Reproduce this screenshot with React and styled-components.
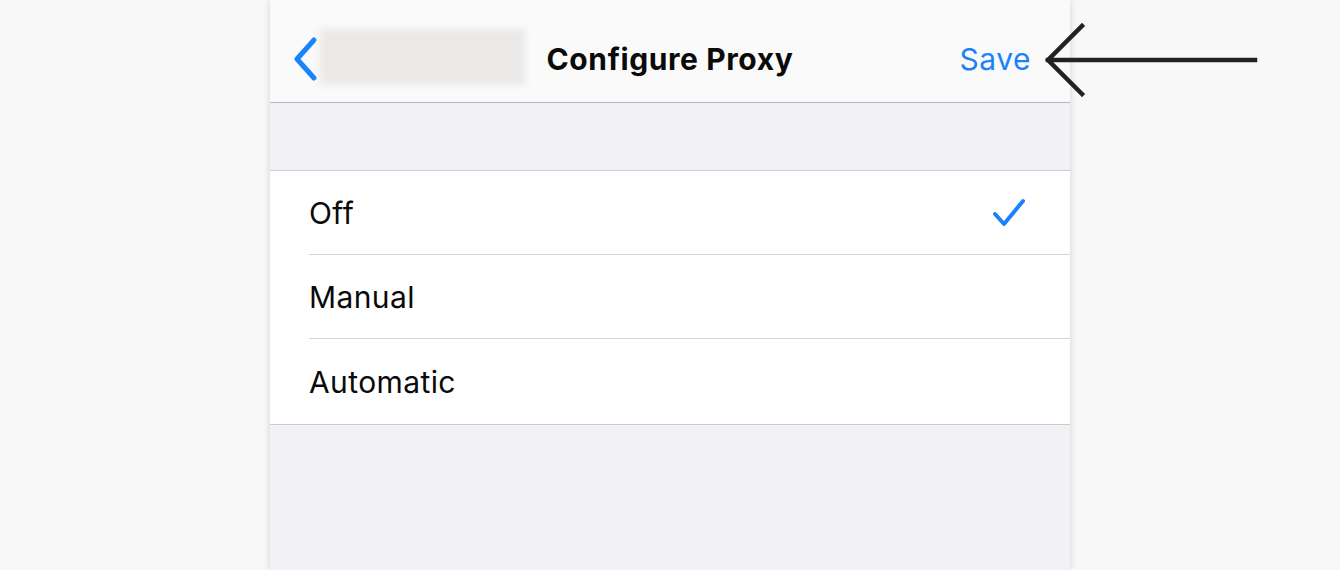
import React from "react";
import styled, { createGlobalStyle } from "styled-components";

const Global = createGlobalStyle`
  html, body { margin: 0; padding: 0; background: #f8f8f8; }
  body { font-family: Inter, "Open Sans", "Liberation Sans", sans-serif; }
  * { box-sizing: border-box; }
`;

const Page = styled.div`
  position: relative;
  width: 1340px;
  height: 570px;
  overflow: hidden;
  display: flex;
  justify-content: center;
`;

const Phone = styled.div`
  width: 800px;
  height: 570px;
  background: #f1f1f6;
  box-shadow: 0 0 7px rgba(0, 0, 0, 0.16);
  display: flex;
  flex-direction: column;
`;

const NavBar = styled.div`
  height: 103px;
  background: #fafafa;
  border-bottom: 1px solid #b9b9bb;
  display: grid;
  grid-template-columns: 1fr auto 1fr;
  align-items: center;
  padding: 16px 39px 0 39px;
`;

const NavLeft = styled.div`
  display: flex;
  align-items: center;
  margin-left: -17px;
`;

const Blur = styled.div`
  width: 205px;
  height: 56px;
  margin-top: -4px;
  background: #ebe9e8;
  filter: blur(3px);
  border-radius: 2px;
`;

const Title = styled.div`
  font-size: 30px;
  font-weight: 700;
  color: #0a0a0a;
  letter-spacing: 0.6px;
`;

const SaveBtn = styled.div`
  justify-self: end;
  font-size: 30px;
  letter-spacing: 0.5px;
  color: #1a82fb;
`;

const Spacer = styled.div`
  height: 67px;
`;

const List = styled.div`
  background: #ffffff;
  border-top: 1px solid #cbcbcd;
  border-bottom: 1px solid #cbcbcd;
`;

const Row = styled.div`
  height: ${(p) => (p.$last ? 85 : 84)}px;
  margin-left: 39px;
  padding-right: 44px;
  display: flex;
  align-items: center;
  justify-content: space-between;
  border-bottom: ${(p) => (p.$last ? "none" : "1px solid #d4d4d6")};
  font-size: 30px;
  letter-spacing: 0.4px;
  color: #0a0a0a;
`;

const ArrowWrap = styled.svg`
  position: absolute;
  left: 1040px;
  top: 20px;
`;

const Check = () => (
  <svg width="34" height="32" viewBox="0 0 34 32">
    <path d="M3 17 L12 27 L31 4" fill="none" stroke="#1a82fb" strokeWidth="4" strokeLinecap="round" strokeLinejoin="round" />
  </svg>
);

const Chevron = () => (
  <svg width="28" height="44" viewBox="0 0 28 44">
    <path d="M22 3 L5 22 L22 41" fill="none" stroke="#1a82fb" strokeWidth="5" strokeLinecap="round" strokeLinejoin="round" />
  </svg>
);

export default function App() {
  const rows = ["Off", "Manual", "Automatic"];
  return (
    <>
      <Global />
      <Page>
        <Phone>
          <NavBar>
            <NavLeft>
              <Chevron />
              <Blur />
            </NavLeft>
            <Title>Configure Proxy</Title>
            <SaveBtn>Save</SaveBtn>
          </NavBar>
          <Spacer />
          <List>
            {rows.map((r, i) => (
              <Row key={r} $last={i === rows.length - 1}>
                {r}
                {i === 0 && <Check />}
              </Row>
            ))}
          </List>
        </Phone>
        <ArrowWrap width="220" height="80" viewBox="0 0 220 80">
          <path d="M42 6 L8 40 L42 74 M8 40 L215 40" fill="none" stroke="#222222" strokeWidth="4.5" strokeLinecap="square" strokeLinejoin="miter" />
        </ArrowWrap>
      </Page>
    </>
  );
}
